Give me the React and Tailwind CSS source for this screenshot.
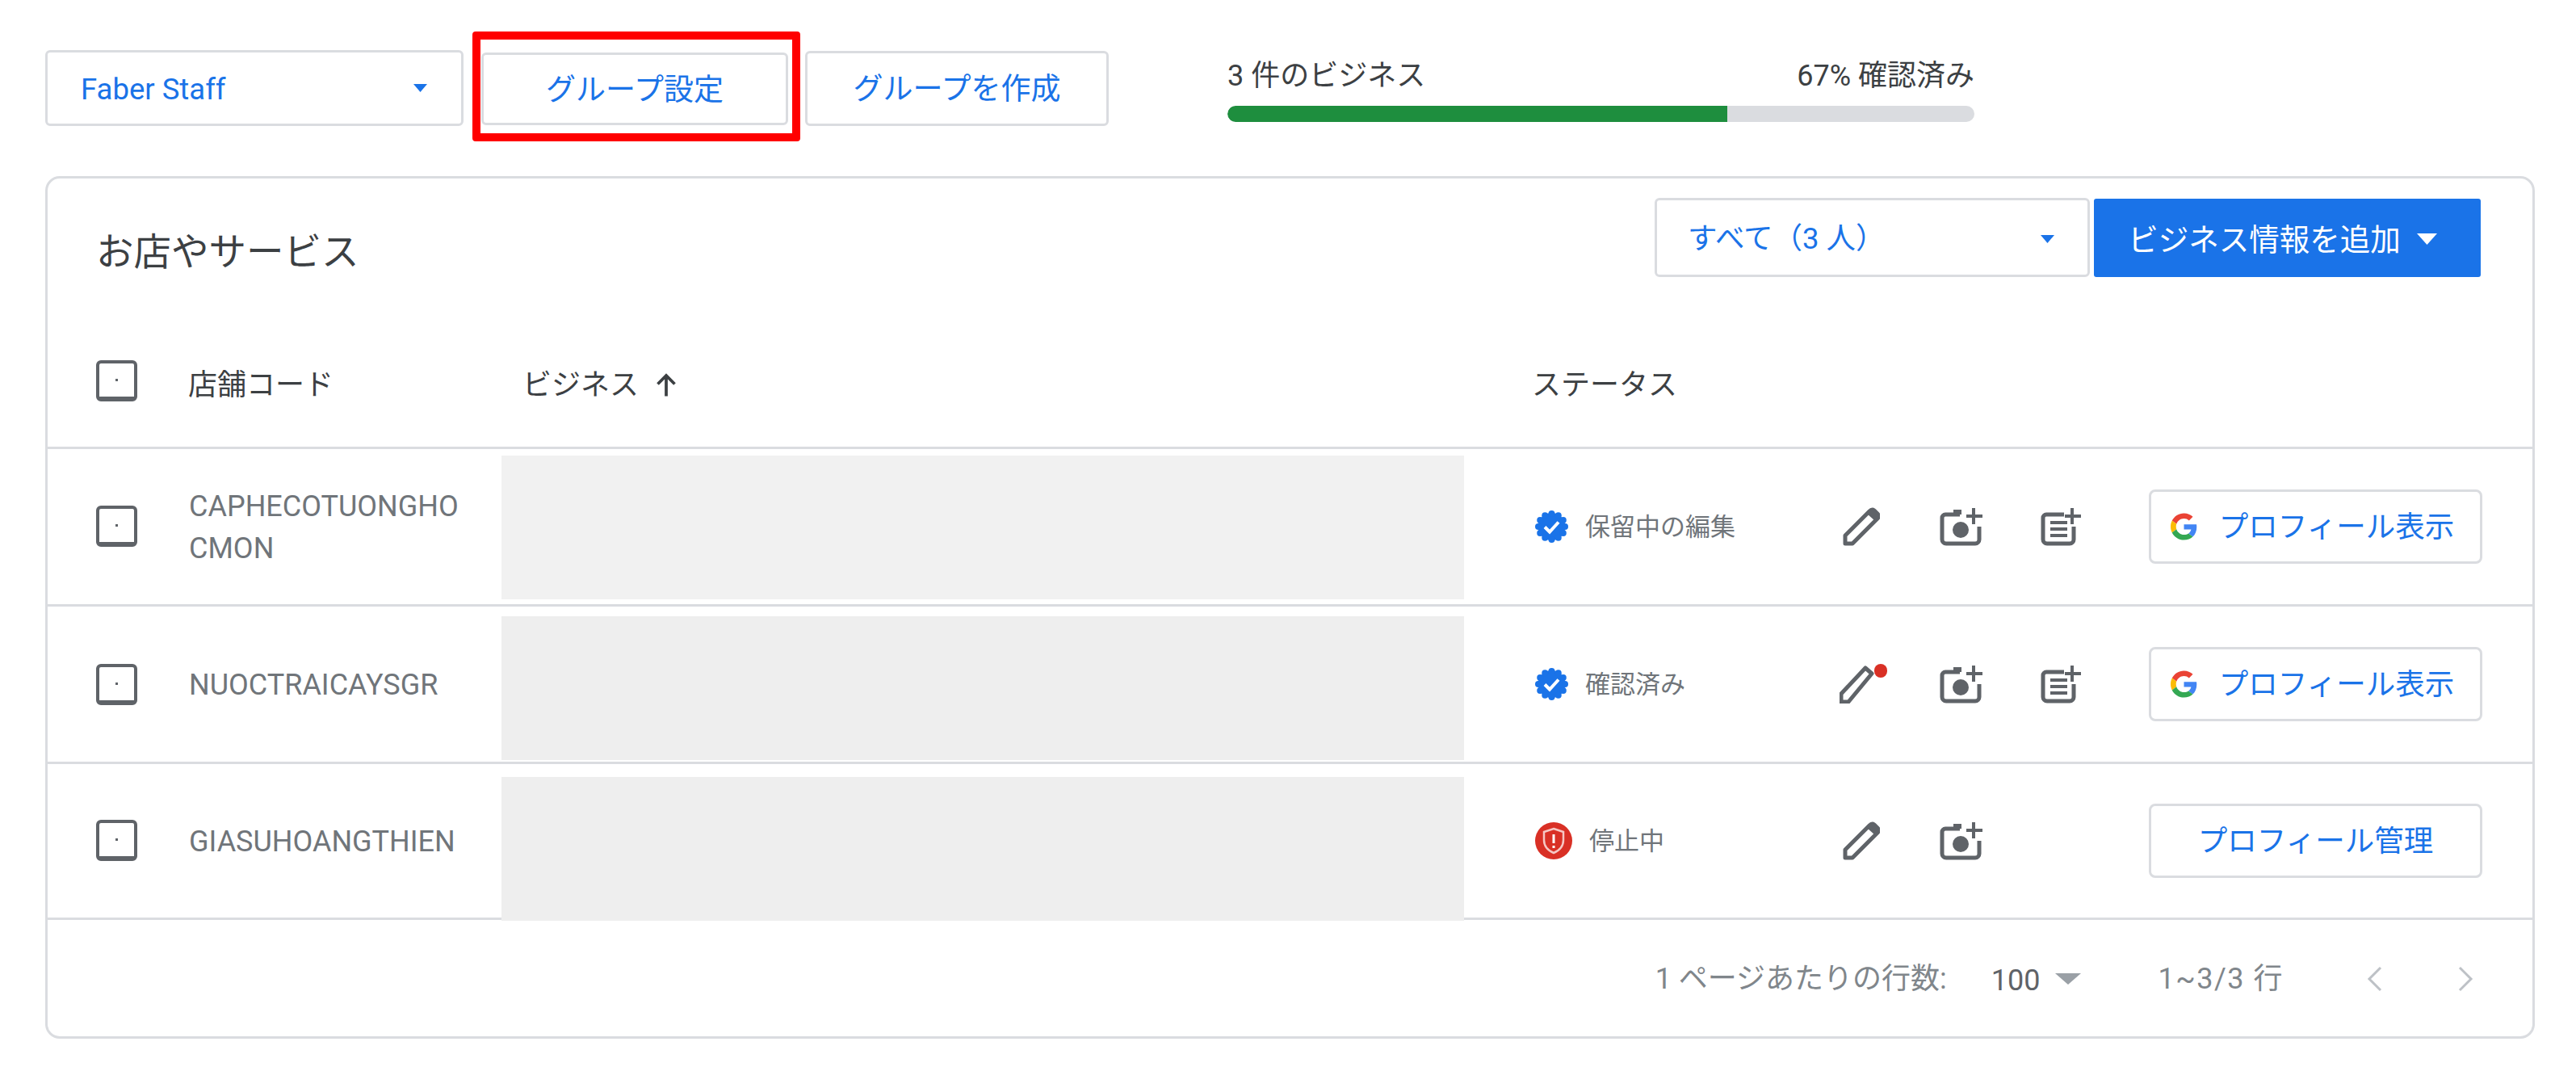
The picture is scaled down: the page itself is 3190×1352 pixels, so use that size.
import React from 'react';

const FONT = "font-['Roboto','Noto_Sans_CJK_JP',sans-serif]";

const rows = [
  {
    code: ['CAPHECOTUONGHO', 'CMON'],
    rowClass: 'h-[195px]',
    boxClass: 'mt-[8px] bg-[#f1f1f1]',
    checkClass: 'mt-[70px]',
    status: '保留中の編集',
    icon: 'verified',
    note: true,
    dot: false,
    button: 'view',
  },
  {
    code: ['NUOCTRAICAYSGR'],
    rowClass: 'h-[195px]',
    boxClass: 'mt-[12px] bg-[#eeeeee]',
    checkClass: 'mt-[71px]',
    status: '確認済み',
    icon: 'verified',
    note: true,
    dot: true,
    button: 'view',
  },
  {
    code: ['GIASUHOANGTHIEN'],
    rowClass: 'h-[193px]',
    boxClass: 'mt-[16px] bg-[#eeeeee]',
    checkClass: 'mt-[69px]',
    status: '停止中',
    icon: 'shield',
    note: false,
    dot: false,
    button: 'manage',
  },
];

function Caret({ className }) {
  return (
    <svg viewBox="0 0 10 6" preserveAspectRatio="none" className={className} fill="currentColor">
      <path d="M0 0h10L5 6z" />
    </svg>
  );
}

function Checkbox({ className = '' }) {
  return (
    <div className={`flex h-[51px] w-[51px] shrink-0 items-center justify-center rounded-[6px] border-[4px] border-b-[6px] border-[#5f6368] ${className}`}>
      <span className="h-[3px] w-[3px] bg-[#5f6368]" />
    </div>
  );
}

function PencilIcon({ thin }) {
  if (thin) {
    return (
      <div className="relative -ml-[4px] h-[48px] w-[46px]">
        <svg viewBox="0 0 46 48" className="h-[48px] w-[46px]" fill="none" stroke="#5f6368" strokeWidth="5" strokeLinejoin="round">
          <path d="M2 46V36L32 4l8 7L11 46z" />
        </svg>
        <span className="absolute -right-[13px] -top-[1px] h-[17px] w-[16px] rounded-full bg-[#d93025]" />
      </div>
    );
  }
  return (
    <svg viewBox="0 0 46 48" className="h-[48px] w-[46px]" fill="none" stroke="#5f6368" strokeWidth="5" strokeLinejoin="round">
      <path d="M3 45V35L33 5q3-3 6-1l4 4q3 3 0 6L12 45z" />
      <path d="M30 8l3-3q3-3 6-1l4 4q3 3 0 6l-3 3z" fill="#5f6368" stroke="none" />
    </svg>
  );
}

function CameraIcon() {
  return (
    <svg viewBox="0 0 53 48" className="h-[48px] w-[53px]" fill="none" stroke="#5f6368" strokeWidth="5">
      <path d="M25 9H7a4 4 0 0 0-4 4v27a5 5 0 0 0 5 5h36a5 5 0 0 0 5-5V24" />
      <path d="M17 6h10" strokeWidth="6" />
      <path d="M42 1v20M33 11h20" strokeWidth="4" />
      <circle cx="26" cy="28" r="10" fill="#5f6368" stroke="none" />
    </svg>
  );
}

function NoteIcon() {
  return (
    <svg viewBox="0 0 50 48" className="h-[48px] w-[50px]" fill="none" stroke="#5f6368" strokeWidth="5">
      <path d="M29 9H7a4 4 0 0 0-4 4v27a5 5 0 0 0 5 5h28a5 5 0 0 0 5-5V24" />
      <path d="M12 19h21M12 27h21M12 35h21" strokeWidth="4" />
      <path d="M39 1v20M30 11h20" strokeWidth="4" />
    </svg>
  );
}

function VerifiedIcon() {
  const bumps = Array.from({ length: 12 }, (_, i) => {
    const a = (i / 12) * Math.PI * 2;
    return [20.5 + Math.cos(a) * 16.5, 20 + Math.sin(a) * 16];
  });
  return (
    <svg viewBox="0 0 41 40" className="h-[40px] w-[41px] shrink-0">
      <circle cx="20.5" cy="20" r="17" fill="#1a73e8" />
      {bumps.map(([x, y], i) => (
        <circle key={i} cx={x} cy={y} r="4" fill="#1a73e8" />
      ))}
      <path d="M12 20.5l6 6 11-12" fill="none" stroke="#fff" strokeWidth="4" />
    </svg>
  );
}

function ShieldIcon() {
  return (
    <svg viewBox="0 0 46 46" className="h-[46px] w-[46px] shrink-0">
      <circle cx="23" cy="23" r="23" fill="#d93025" />
      <path d="M23 8l12 4v10c0 8-5 13-12 16-7-3-12-8-12-16V12z" fill="none" stroke="#f6c7c3" strokeWidth="2.5" />
      <path d="M23 15v11M23 29v3" stroke="#fff" strokeWidth="3" />
    </svg>
  );
}

function GoogleIcon() {
  return (
    <svg viewBox="0 0 48 48" className="h-[34px] w-[33px]">
      <path fill="#EA4335" d="M24 9.5c3.54 0 6.71 1.22 9.21 3.6l6.85-6.85C35.9 2.38 30.47 0 24 0 14.62 0 6.51 5.38 2.56 13.22l7.98 6.19C12.43 13.72 17.74 9.5 24 9.5z" />
      <path fill="#4285F4" d="M46.98 24.55c0-1.57-.15-3.09-.38-4.55H24v9.02h12.94c-.58 2.96-2.26 5.48-4.78 7.18l7.73 6c4.51-4.18 7.09-10.36 7.09-17.65z" />
      <path fill="#FBBC05" d="M10.53 28.59c-.48-1.45-.76-2.99-.76-4.59s.27-3.14.76-4.59l-7.98-6.19C.92 16.46 0 20.12 0 24c0 3.88.92 7.54 2.56 10.78l7.97-6.19z" />
      <path fill="#34A853" d="M24 48c6.48 0 11.93-2.13 15.89-5.81l-7.73-6c-2.15 1.45-4.92 2.3-8.16 2.3-6.26 0-11.57-4.22-13.47-9.91l-7.98 6.19C6.51 42.62 14.62 48 24 48z" />
    </svg>
  );
}

function TopBar() {
  return (
    <div className="flex items-start pl-[56px] pt-[62px]">
      <div className="flex h-[94px] w-[518px] items-center justify-between rounded-[6px] border-[3px] border-[#dadce0] pl-[41px] pr-[42px] pt-[5px] text-[36.5px] text-[#1a73e8]">
        <span>Faber Staff</span>
        <Caret className="mb-[6px] h-[10px] w-[17px]" />
      </div>
      <div className="relative ml-[22px] mt-[3px] flex h-[90px] w-[380px] items-center justify-center rounded-[6px] border-[3px] border-[#dadce0] pt-[3px] text-[37px] text-[#1a73e8]">
        グループ設定
        <div className="absolute -bottom-[23px] -left-[14px] -right-[18px] -top-[29px] rounded-[4px] border-[10px] border-[#ff0000]" />
      </div>
      <div className="ml-[21px] mt-[1px] flex h-[93px] w-[376px] items-center justify-center rounded-[6px] border-[3px] border-[#dadce0] pt-[3px] text-[37px] text-[#1a73e8]">
        グループを作成
      </div>
      <div className="ml-[147px] mt-[14px] w-[925px] text-[36px] text-[#3c4043]">
        <div className="flex h-[36px] items-center justify-between">
          <span>3 件のビジネス</span>
          <span>67% 確認済み</span>
        </div>
        <div className="mt-[19px] h-[20px] overflow-hidden rounded-full bg-[#dadce0]">
          <div className="h-full w-[619px] rounded-l-full bg-[#1e8e3e]" />
        </div>
      </div>
    </div>
  );
}

function TableHead() {
  return (
    <>
      <div className="flex h-[125px] items-start justify-between pl-[60px] pr-[64px] pt-[24px]">
        <h1 className="mt-[37px] text-[46.5px] font-normal leading-[60px] text-[#3c4043]">お店やサービス</h1>
        <div className="flex">
          <div className="flex h-[98px] w-[539px] items-center justify-between rounded-[6px] border-[3px] border-[#dadce0] pl-[38px] pr-[41px] pt-[4px] text-[36.5px] text-[#1a73e8]">
            <span>すべて（3 人）</span>
            <Caret className="h-[10px] w-[17px]" />
          </div>
          <div className="ml-[5px] mt-[1px] flex h-[97px] w-[479px] items-center justify-center gap-[20px] rounded-[3px] bg-[#1a73e8] pr-[12px] pt-[6px] text-[37.5px] text-white">
            <span>ビジネス情報を追加</span>
            <Caret className="mb-[4px] h-[14px] w-[25px]" />
          </div>
        </div>
      </div>
      <div className="flex h-[210px] items-center border-b-[3px] border-[#dadce0] pl-[60px] pt-[54px] text-[36px] text-[#3c4043]">
        <Checkbox className="mb-[10px]" />
        <div className="ml-[63px] w-[414px]">店舗コード</div>
        <div className="flex w-[1250px] items-center">
          <span>ビジネス</span>
          <svg viewBox="0 0 24 24" className="ml-[16px] h-[36px] w-[36px]" fill="none" stroke="#3c4043" strokeWidth="2.5">
            <path d="M12 21V4M5 11l7-7 7 7" />
          </svg>
        </div>
        <div>ステータス</div>
      </div>
    </>
  );
}

function Row({ row }) {
  return (
    <div className={`flex items-start border-b-[3px] border-[#dadce0] pl-[60px] ${row.rowClass}`}>
      <Checkbox className={row.checkClass} />
      <div className="ml-[64px] flex h-full w-[387px] flex-col justify-center pt-[2px] text-[36px] leading-[52px] text-[#70757a]">
        {row.code.map((line) => (
          <div key={line}>{line}</div>
        ))}
      </div>
      <div className={`h-[178px] w-[1192px] shrink-0 ${row.boxClass}`} />
      <div className="flex h-full w-[469px] shrink-0 items-center pl-[88px] text-[31px] text-[#70757a]">
        {row.icon === 'verified' ? <VerifiedIcon /> : <ShieldIcon />}
        <span className="ml-[21px] mt-[3px]">{row.status}</span>
      </div>
      <div className="flex h-full w-[379px] shrink-0 items-center">
        <div className="w-[120px]">
          <PencilIcon thin={row.dot} />
        </div>
        <div className="w-[125px]">
          <CameraIcon />
        </div>
        {row.note && <NoteIcon />}
      </div>
      <div className="flex h-full items-center">
        <div className={`flex h-[92px] w-[413px] items-center justify-center gap-[27px] rounded-[8px] border-[3px] border-[#dadce0] text-[36.5px] text-[#1a73e8] ${row.button === 'view' ? 'pr-[8px]' : ''}`}>
          {row.button === 'view' && <GoogleIcon />}
          <span className="mt-[3px]">{row.button === 'view' ? 'プロフィール表示' : 'プロフィール管理'}</span>
        </div>
      </div>
    </div>
  );
}

function Footer() {
  return (
    <div className="flex h-[144px] items-center justify-end pr-[72px] pt-[2px] text-[36px] text-[#80868b]">
      <span>1 ページあたりの行数:</span>
      <span className="ml-[55px] mt-[4px] text-[#5f6368]">100</span>
      <Caret className="ml-[18px] h-[14px] w-[32px] text-[#9aa0a6]" />
      <span className="ml-[96px] tracking-[1.5px]">1~3/3 行</span>
      <svg viewBox="0 0 20 32" className="ml-[102px] h-[32px] w-[20px]" fill="none" stroke="#bdc1c6" strokeWidth="3">
        <path d="M18 2L4 16l14 14" />
      </svg>
      <svg viewBox="0 0 20 32" className="ml-[94px] h-[32px] w-[20px]" fill="none" stroke="#bdc1c6" strokeWidth="3">
        <path d="M2 2l14 14L2 30" />
      </svg>
    </div>
  );
}

export default function App() {
  return (
    <div className={`h-[1352px] w-[3190px] overflow-hidden bg-white ${FONT}`}>
      <TopBar />
      <div className="ml-[56px] mt-[62px] w-[3083px] rounded-[18px] border-[3px] border-[#dadce0]">
        <TableHead />
        {rows.map((row) => (
          <Row key={row.code[0]} row={row} />
        ))}
        <Footer />
      </div>
    </div>
  );
}
